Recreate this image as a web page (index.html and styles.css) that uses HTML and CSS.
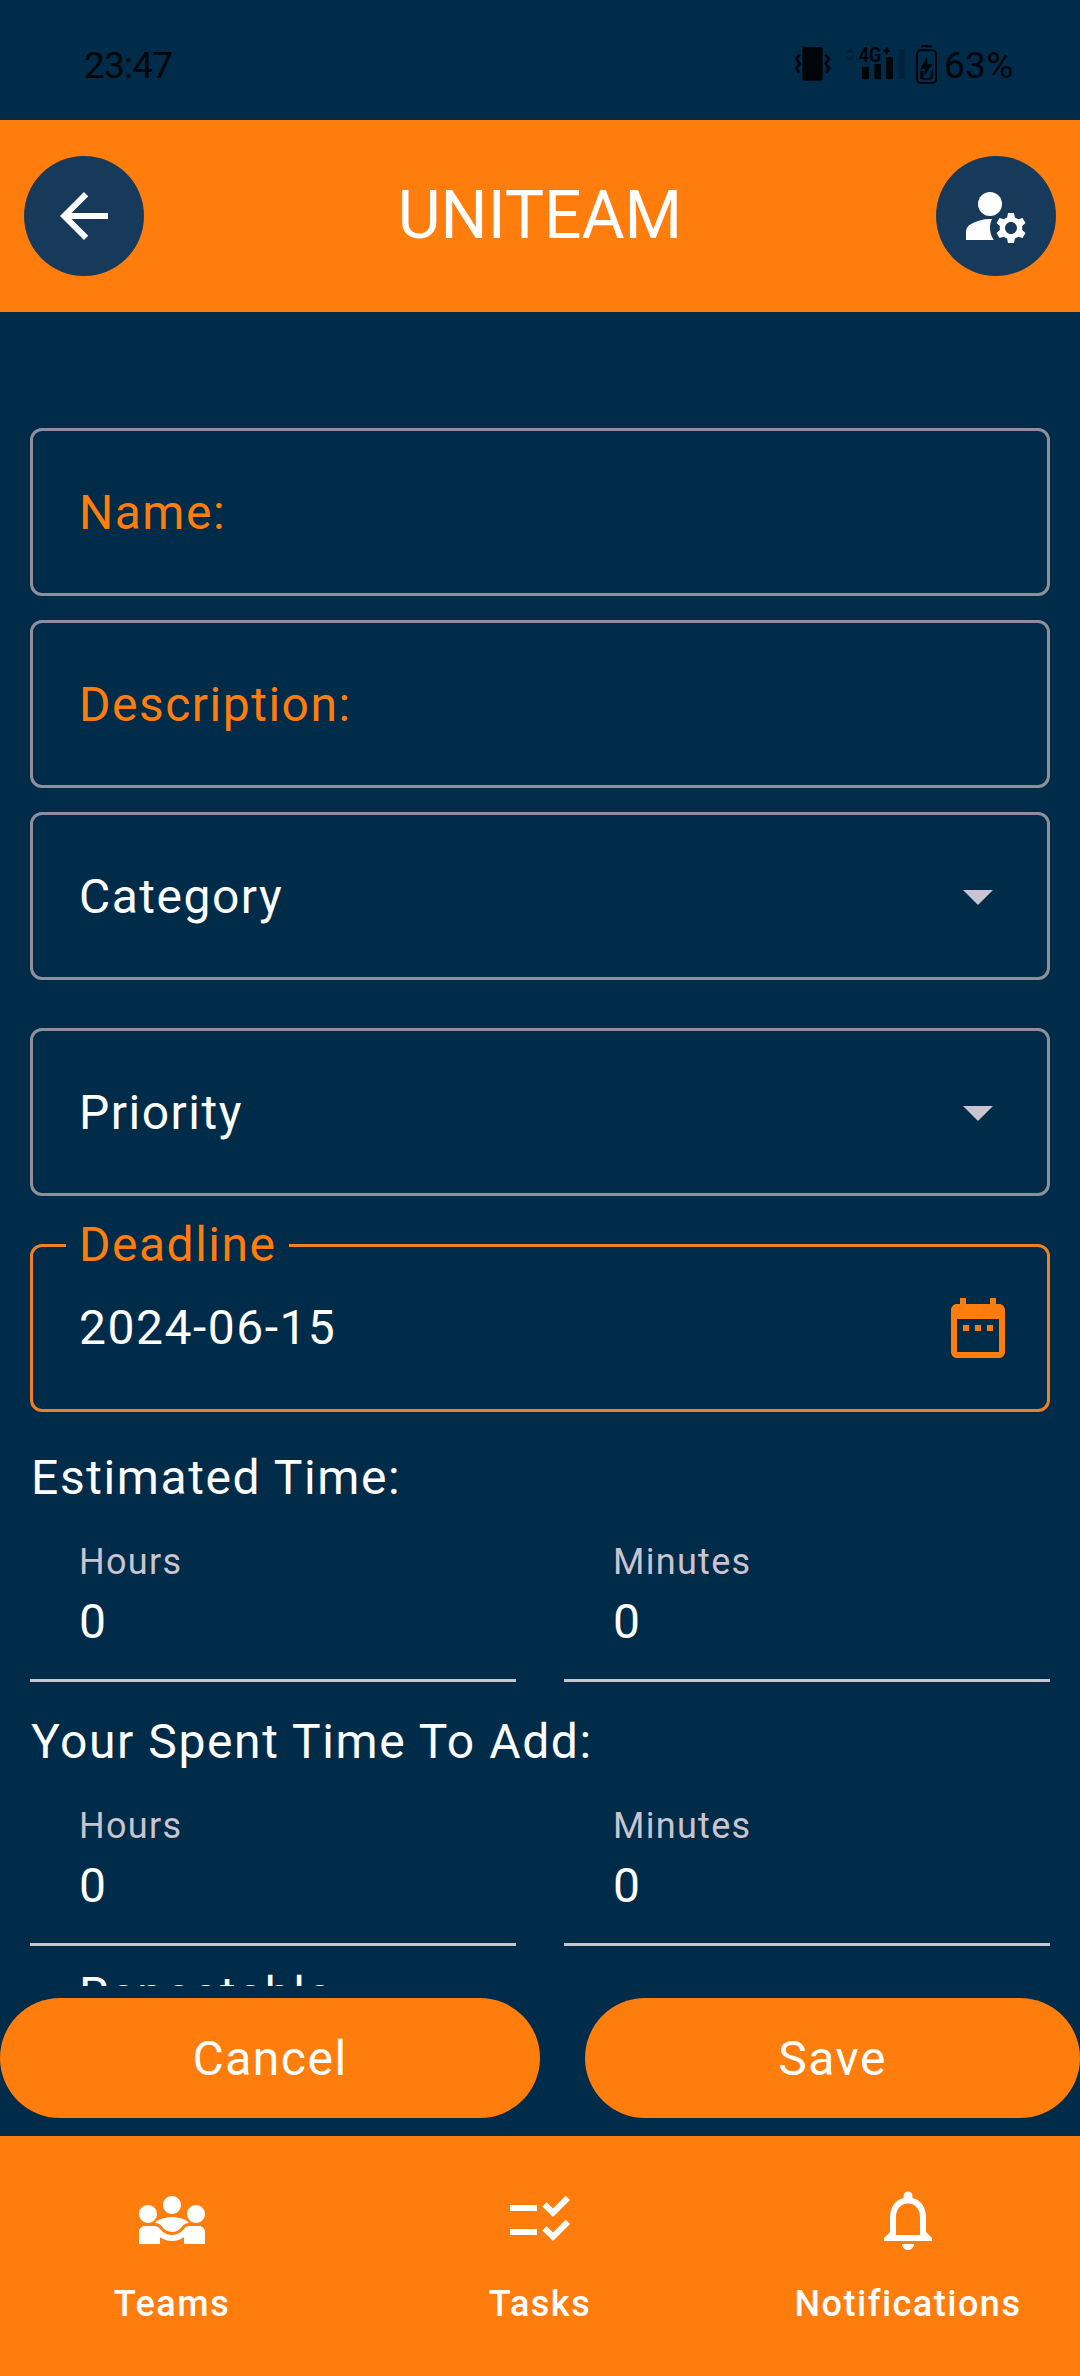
FILE: index.html
```html
<!DOCTYPE html>
<html lang="en">
<head>
<meta charset="utf-8">
<title>UNITEAM</title>
<link rel="stylesheet" href="styles.css">
</head>
<body>
<div class="app">
  <div class="status">
    <span class="clock">23:47</span>
    <svg class="status-icons" viewBox="30 30 450 150">
      <rect x="67" y="51" width="61" height="101" rx="7"/>
      <path class="wave" d="M59 74L49 87L59 101L49 114L57 128M136 74L147 87L137 101L147 114L139 128"/>
      <path class="faint" d="M197 69L211 53L225 69ZM197 80H225L211 94ZM356 57H374V147H356Z"/>
      <rect x="246" y="110" width="21" height="38" rx="4"/>
      <rect x="283" y="102" width="20" height="46" rx="4"/>
      <rect x="318" y="82" width="21" height="66" rx="4"/>
      <text class="net" x="236" y="97" textLength="68" lengthAdjust="spacingAndGlyphs">4G</text>
      <path d="M317 52h6v7h7v6h-7v7h-6v-7h-7v-6h7z"/>
      <rect x="423" y="45" width="33" height="7" rx="2"/>
      <rect class="cell" x="411" y="61" width="57" height="98" rx="11"/>
      <path d="M441 80L421 117H436L433 138L458 103H442ZM420 122H431L430 145H448L459 115V138Q459 149 449 149H430Q420 149 420 140Z"/>
    </svg>
    <span class="percent">63%</span>
  </div>

  <header class="topbar">
    <div class="round">
      <svg class="icon" viewBox="0 0 24 24"><path d="M20 11H7.83l5.59-5.59L12 4l-8 8 8 8 1.41-1.41L7.83 13H20v-2z"/></svg>
    </div>
    <h1 class="title">UNITEAM</h1>
    <div class="round">
      <svg class="icon" viewBox="0 0 24 24"><circle cx="10" cy="8" r="4"/><path d="M10.67 13.02C10.45 13.01 10.23 13 10 13c-2.42 0-4.68.67-6.61 1.82C2.51 15.34 2 16.32 2 17.35V20h9.26A6.963 6.963 0 0 1 10 16c0-1.07.25-2.07.67-2.98zM20.75 16c0-.22-.03-.42-.06-.63l1.14-1.01-1-1.73-1.45.49c-.32-.27-.68-.48-1.08-.63L18 11h-2l-.3 1.49c-.4.15-.76.36-1.08.63l-1.45-.49-1 1.73 1.14 1.01c-.03.21-.06.41-.06.63s.03.42.06.63l-1.14 1.01 1 1.73 1.45-.49c.32.27.68.48 1.08.63L16 21h2l.3-1.49c.4-.15.76-.36 1.08-.63l1.45.49 1-1.73-1.14-1.01c.03-.21.06-.41.06-.63zM17 18c-1.1 0-2-.9-2-2s.9-2 2-2 2 .9 2 2-.9 2-2 2z"/></svg>
    </div>
  </header>

  <main class="form">
    <div class="field accent"><span class="text">Name:</span></div>
    <div class="field accent"><span class="text">Description:</span></div>
    <div class="field select"><span class="text">Category</span>
      <svg class="icon arrow" viewBox="0 0 24 24"><path d="M7 10l5 5 5-5z"/></svg>
    </div>
    <div class="field select"><span class="text">Priority</span>
      <svg class="icon arrow" viewBox="0 0 24 24"><path d="M7 10l5 5 5-5z"/></svg>
    </div>
    <div class="field date">
      <span class="float-label">Deadline</span>
      <span>2024-06-15</span>
      <svg class="icon calendar" viewBox="0 0 24 24"><path d="M9 11H7v2h2v-2zm4 0h-2v2h2v-2zm4 0h-2v2h2v-2zm2-7h-1V2h-2v2H8V2H6v2H5c-1.11 0-1.99.9-1.99 2L3 20c0 1.1.89 2 2 2h14c1.1 0 2-.9 2-2V6c0-1.1-.9-2-2-2zm0 16H5V9h14v11z"/></svg>
    </div>

    <section class="time">
      <h2 class="caption">Estimated Time:</h2>
      <div class="pair">
        <div class="number"><span class="unit">Hours</span><span class="value">0</span></div>
        <div class="number"><span class="unit">Minutes</span><span class="value">0</span></div>
      </div>
    </section>
    <section class="time">
      <h2 class="caption">Your Spent Time To Add:</h2>
      <div class="pair">
        <div class="number"><span class="unit">Hours</span><span class="value">0</span></div>
        <div class="number"><span class="unit">Minutes</span><span class="value">0</span></div>
      </div>
    </section>
    <div class="repeat">Repeatable</div>
  </main>

  <div class="actions">
    <div class="button cancel">Cancel</div>
    <div class="button save">Save</div>
  </div>

  <nav class="tabs">
    <div class="tab">
      <svg class="icon" viewBox="0 0 24 24"><path d="M6.32 13.01c.96.02 1.85.5 2.45 1.34C9.5 15.38 10.71 16 12 16s2.5-.62 3.23-1.66c.6-.84 1.49-1.32 2.45-1.34C16.96 11.78 14.08 11 12 11c-2.07 0-4.96.78-5.68 2.01zM4 13c1.66 0 3-1.34 3-3s-1.34-3-3-3-3 1.34-3 3 1.34 3 3 3zm16 0c1.66 0 3-1.34 3-3s-1.34-3-3-3-3 1.34-3 3 1.34 3 3 3zm-8-3c1.66 0 3-1.34 3-3s-1.34-3-3-3-3 1.34-3 3 1.34 3 3 3zm9 4h-3.27c-.77 0-1.35.45-1.68.92C16.01 14.98 14.69 17 12 17c-1.43 0-3.03-.64-4.05-2.08C7.56 14.37 6.95 14 6.27 14H3c-1.1 0-2 .9-2 2v4h7v-2.26c1.15.8 2.54 1.26 4 1.26s2.85-.46 4-1.26V20h7v-4c0-1.1-.9-2-2-2z"/></svg>
      <span>Teams</span>
    </div>
    <div class="tab">
      <svg class="icon" viewBox="0 0 24 24"><path d="M11 7H2v2h9V7zm0 8H2v2h9v-2zm5.34-4l-3.54-3.54 1.41-1.41 2.12 2.12 4.24-4.24L22 5.34 16.34 11zm0 8l-3.54-3.54 1.41-1.41 2.12 2.12 4.24-4.24L22 13.34 16.34 19z"/></svg>
      <span>Tasks</span>
    </div>
    <div class="tab">
      <svg class="icon" viewBox="0 0 24 24"><path d="M12 22c1.1 0 2-.9 2-2h-4c0 1.1.9 2 2 2zm6-6v-5c0-3.07-1.63-5.64-4.5-6.32V4c0-.83-.67-1.5-1.5-1.5s-1.5.67-1.5 1.5v.68C7.64 5.36 6 7.92 6 11v5l-2 2v1h16v-1l-2-2zm-2 1H8v-6c0-2.48 1.51-4.5 4-4.5s4 2.02 4 4.5v6z"/></svg>
      <span>Notifications</span>
    </div>
  </nav>
</div>
</body>
</html>
```
FILE: styles.css
```css
* { box-sizing: border-box; }

body {
  margin: 0;
  background: #002b49;
  font-family: Roboto, sans-serif;
}

.app {
  display: flex;
  flex-direction: column;
  width: 1080px;
  height: 2376px;
  overflow: hidden;
  color: #fff;
  font-size: 48px;
  line-height: 72px;
  letter-spacing: 1.5px;
}

.status {
  display: flex;
  height: 120px;
  padding: 40px 65px 0 84px;
  color: #00050a;
  font-size: 37px;
  line-height: 52px;
  letter-spacing: -0.8px;
}
.clock { flex: 1; }
.status-icons { width: 150px; height: 50px; fill: #00050a; }
.wave { fill: none; stroke: #00050a; stroke-width: 8; }
.faint { fill: #00233d; }
.net { font-family: Roboto, sans-serif; font-size: 59px; font-weight: 600; letter-spacing: 0; }
.cell { fill: none; stroke: #00050a; stroke-width: 6; }
.percent { width: 75px; padding-left: 4px; letter-spacing: 0.3px; white-space: nowrap; }

.topbar {
  display: flex;
  align-items: center;
  justify-content: space-between;
  height: 192px;
  padding: 0 24px;
  background: #ff7d0d;
}
.title {
  margin: 0;
  font-size: 66px;
  font-weight: 400;
  letter-spacing: 0;
}
.round {
  display: flex;
  align-items: center;
  justify-content: center;
  width: 120px;
  height: 120px;
  border-radius: 50%;
  background: #173a5a;
}
.icon { width: 72px; height: 72px; fill: #fff; flex: none; }

.form {
  display: flex;
  flex-direction: column;
  height: 1674px;
  padding: 116px 30px 0;
  overflow: hidden;
}
.field {
  display: flex;
  flex: none;
  align-items: center;
  justify-content: space-between;
  height: 168px;
  margin-bottom: 24px;
  padding: 0 33px 0 46px;
  border: 3px solid #8f8f9b;
  border-radius: 12px;
}
.text { padding-top: 2px; }
.accent { color: #ff7d0d; }
.select { margin-bottom: 48px; }
.arrow { fill: #cac4d0; }
.date {
  position: relative;
  margin-bottom: 30px;
  border-color: #ee8126;
}
.float-label {
  position: absolute;
  top: -38px;
  left: 33px;
  padding: 0 13px;
  background: #002b49;
  color: #ff7d0d;
}
.calendar { fill: #ff7d0d; }

.time { flex: none; height: 264px; }
.caption {
  margin: 0;
  padding-left: 1px;
  font-size: 48px;
  font-weight: 400;
  line-height: 72px;
  letter-spacing: 1.6px;
}
.pair {
  display: grid;
  grid-template-columns: 1fr 1fr;
  gap: 48px;
}
.number {
  display: flex;
  flex-direction: column;
  height: 168px;
  padding: 24px 48px 0 49px;
  border-bottom: 3px solid #cac4d0;
}
.unit { color: #cac4d0; font-size: 36px; line-height: 48px; letter-spacing: 1.3px; }
.value { line-height: 72px; }
.repeat { flex: none; padding-left: 49px; line-height: 72px; margin-top: -11px; }

.actions {
  display: flex;
  justify-content: space-between;
  height: 150px;
  padding: 12px 0 18px;
}
.button {
  border-radius: 60px;
  background: #ff7d0d;
  line-height: 121px;
  text-align: center;
}
.cancel { width: 540px; }
.save { width: 495px; }

.tabs {
  display: grid;
  grid-template-columns: repeat(3, 1fr);
  gap: 24px;
  height: 240px;
  padding-top: 48px;
  background: #ff7d0d;
}
.tab {
  display: flex;
  flex-direction: column;
  align-items: center;
  gap: 24px;
  font-size: 36px;
  font-weight: 500;
  line-height: 48px;
}
```
